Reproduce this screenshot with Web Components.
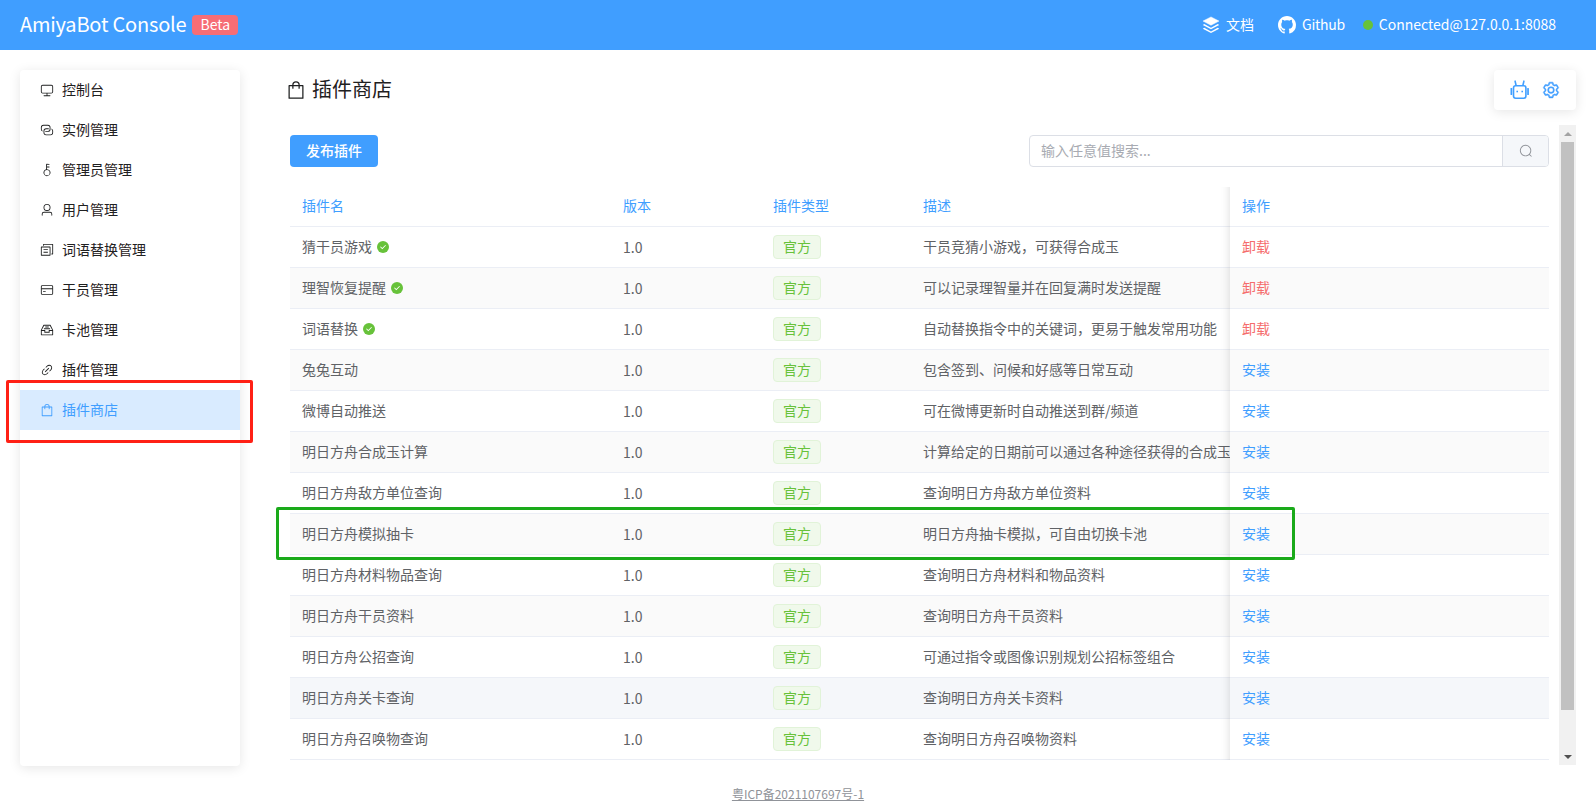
<!DOCTYPE html>
<html lang="zh-CN">
<head>
<meta charset="utf-8">
<title>AmiyaBot Console</title>
<style>
  html, body { margin: 0; height: 100%; overflow: hidden; background: #fff; }
  body { font: 14px/1.5 "Noto Sans CJK SC", "Noto Sans", sans-serif; color: #303133; }
</style>
</head>
<body>
<console-app></console-app>

<script>
"use strict";

// element-plus 아이콘 (viewBox 1024)
const ICONS = {
  monitor: '<path d="M544 768v128h192a32 32 0 1 1 0 64H288a32 32 0 1 1 0-64h192V768H192A128 128 0 0 1 64 640V256a128 128 0 0 1 128-128h640a128 128 0 0 1 128 128v384a128 128 0 0 1-128 128H544zM192 192a64 64 0 0 0-64 64v384a64 64 0 0 0 64 64h640a64 64 0 0 0 64-64V256a64 64 0 0 0-64-64H192z"/>',
  connection: '<path d="M640 384v64H448a128 128 0 0 0-128 128v128a128 128 0 0 0 128 128h320a128 128 0 0 0 128-128V576a128 128 0 0 0-64-110.848V394.88c74.56 26.368 128 97.472 128 181.056v128a192 192 0 0 1-192 192H448a192 192 0 0 1-192-192V576a192 192 0 0 1 192-192h192z"/><path d="M384 640v-64h192a128 128 0 0 0 128-128V320a128 128 0 0 0-128-128H256a128 128 0 0 0-128 128v128a128 128 0 0 0 64 110.848v70.272A192.064 192.064 0 0 1 64 448V320a192 192 0 0 1 192-192h320a192 192 0 0 1 192 192v128a192 192 0 0 1-192 192H384z"/>',
  key: '<path d="M448 456.064V96a32 32 0 0 1 32-32.064L672 64a32 32 0 0 1 0 64H512v128h160a32 32 0 0 1 0 64H512v128a256 256 0 1 1-64 8.064zM512 896a192 192 0 1 0 0-384 192 192 0 0 0 0 384z"/>',
  user: '<path d="M512 512a192 192 0 1 0 0-384 192 192 0 0 0 0 384zm0 64a256 256 0 1 1 0-512 256 256 0 0 1 0 512zm320 320v-96a96 96 0 0 0-96-96H288a96 96 0 0 0-96 96v96a32 32 0 1 1-64 0v-96a160 160 0 0 1 160-160h448a160 160 0 0 1 160 160v96a32 32 0 1 1-64 0z"/>',
  files: '<path d="M256 64h672a32 32 0 0 1 32 32v704a32 32 0 0 1-32 32h-96v-64h64V128H288v64h-64V96a32 32 0 0 1 32-32z"/><path d="M128 256h608a32 32 0 0 1 32 32v608a32 32 0 0 1-32 32H96a32 32 0 0 1-32-32V288a32 32 0 0 1 32-32h32zm0 64v544h576V320H128z"/><path d="M256 448h320v64H256zM256 640h320v64H256z"/>',
  card: '<path d="M160 160h704a96 96 0 0 1 96 96v512a96 96 0 0 1-96 96H160a96 96 0 0 1-96-96V256a96 96 0 0 1 96-96zm0 64a32 32 0 0 0-32 32v512a32 32 0 0 0 32 32h704a32 32 0 0 0 32-32V256a32 32 0 0 0-32-32H160z"/><path d="M96 384h832v64H96zM224 576h192v64H224z"/>',
  box: '<path d="M288 384h448v64H288v-64zm96-128h256v64H384v-64zM131.456 512H384v128h256V512h252.544L721.856 192H302.144L131.456 512zM896 576H704v128H320V576H128v256h768V576zM275.776 128h472.448a32 32 0 0 1 28.608 17.664l179.84 359.552A32 32 0 0 1 960 519.552V864a32 32 0 0 1-32 32H96a32 32 0 0 1-32-32V519.552a32 32 0 0 1 3.392-14.336l179.776-359.552A32 32 0 0 1 275.776 128z"/>',
  link: '<path d="M715.648 625.152 670.4 579.904l90.496-90.56c75.008-74.944 85.12-186.368 22.656-248.896-62.528-62.464-173.952-52.352-248.96 22.656L444.16 353.6l-45.248-45.248 90.496-90.496c100.032-99.968 251.968-110.08 339.456-22.656 87.488 87.488 77.312 239.424-22.656 339.456l-90.496 90.56zm-90.496 90.496-90.496 90.56C434.624 906.24 282.688 916.352 195.2 828.8c-87.488-87.424-77.312-239.36 22.656-339.392l90.56-90.56 45.248 45.248-90.56 90.56c-75.008 74.944-85.12 186.368-22.656 248.896 62.528 62.464 173.952 52.352 248.96-22.656l90.496-90.496 45.248 45.248zm0-362.048 45.248 45.248L398.848 670.4 353.6 625.152z"/>',
  bag: '<path d="M704 320v96a32 32 0 0 1-32 32h-32V320H384v128h-32a32 32 0 0 1-32-32v-96H192v576h640V320H704zm-384-64a192 192 0 1 1 384 0h160a32 32 0 0 1 32 32v640a32 32 0 0 1-32 32H160a32 32 0 0 1-32-32V288a32 32 0 0 1 32-32h160zm64 0h256a128 128 0 1 0-256 0z"/>',
  search: '<path d="m795.904 750.72 124.992 124.928a32 32 0 0 1-45.248 45.248L750.656 795.904a416 416 0 1 1 45.248-45.248zM480 832a352 352 0 1 0 0-704 352 352 0 0 0 0 704z"/>',
  setting: '<path stroke="currentColor" stroke-width="28" d="M600.704 64a32 32 0 0 1 30.464 22.208l35.2 109.376c14.784 7.232 28.928 15.36 42.432 24.512l112.384-24.192a32 32 0 0 1 34.432 15.36L944.32 364.8a32 32 0 0 1-4.032 37.504l-77.12 85.12a357.12 357.12 0 0 1 0 49.024l77.12 85.248a32 32 0 0 1 4.032 37.504l-88.704 153.6a32 32 0 0 1-34.432 15.296L708.8 803.904c-13.44 9.088-27.648 17.28-42.368 24.512l-35.264 109.376A32 32 0 0 1 600.704 960H423.296a32 32 0 0 1-30.464-22.208L357.696 828.48a351.616 351.616 0 0 1-42.56-24.64l-112.32 24.256a32 32 0 0 1-34.432-15.36L79.68 659.2a32 32 0 0 1 4.032-37.504l77.12-85.248a357.12 357.12 0 0 1 0-48.896l-77.12-85.248A32 32 0 0 1 79.68 364.8l88.704-153.6a32 32 0 0 1 34.432-15.296l112.32 24.256c13.568-9.152 27.776-17.408 42.56-24.64l35.2-109.312A32 32 0 0 1 423.232 64H600.64zm-23.424 64H446.72l-36.352 113.088-24.512 11.968a294.113 294.113 0 0 0-34.816 20.096l-22.656 15.36-116.224-25.088-65.28 113.152 79.68 88.192-1.92 27.136a293.12 293.12 0 0 0 0 40.192l1.92 27.136-79.808 88.192 65.344 113.152 116.224-25.024 22.656 15.296a294.113 294.113 0 0 0 34.816 20.096l24.512 11.968L446.72 896h130.688l36.48-113.152 24.448-11.904a288.282 288.282 0 0 0 34.752-20.096l22.592-15.296 116.288 25.024 65.28-113.152-79.744-88.192 1.92-27.136a293.12 293.12 0 0 0 0-40.256l-1.92-27.136 79.808-88.128-65.344-113.152-116.288 24.96-22.592-15.232a287.616 287.616 0 0 0-34.752-20.096l-24.448-11.904L577.344 128zM512 320a192 192 0 1 1 0 384 192 192 0 0 1 0-384zm0 64a128 128 0 1 0 0 256 128 128 0 0 0 0-256z"/>',
  robot: '<g fill="none" stroke="currentColor" stroke-width="82" stroke-linecap="round"><rect x="180" y="297" width="634" height="635" rx="110"/><path d="M307 256 260 60M665 256 712 60"/></g><rect x="26" y="410" width="88" height="358" rx="30"/><rect x="880" y="410" width="88" height="358" rx="30"/><rect x="330" y="550" width="80" height="80"/><rect x="585" y="550" width="80" height="80"/>',
  layers: '<path stroke="currentColor" stroke-width="24" stroke-linejoin="round" d="M512 50 970 290 512 530 54 290z"/><path d="M130 460 44 505 512 755 980 505 894 460 512 665z"/><path d="M130 675 44 720 512 970 980 720 894 675 512 880z"/>',
  github: '<path transform="scale(64)" d="M8 0C3.58 0 0 3.58 0 8c0 3.54 2.29 6.53 5.47 7.59.4.07.55-.17.55-.38 0-.19-.01-.82-.01-1.49-2.01.37-2.53-.49-2.69-.94-.09-.23-.48-.94-.82-1.13-.28-.15-.68-.52-.01-.53.63-.01 1.08.58 1.23.82.72 1.21 1.87.87 2.33.66.07-.52.28-.87.51-1.07-1.78-.2-3.64-.89-3.64-3.95 0-.87.31-1.59.82-2.15-.08-.2-.36-1.02.08-2.12 0 0 .67-.21 2.2.82.64-.18 1.32-.27 2-.27.68 0 1.36.09 2 .27 1.53-1.04 2.2-.82 2.2-.82.44 1.1.16 1.92.08 2.12.51.56.82 1.27.82 2.15 0 3.07-1.87 3.75-3.65 3.95.29.25.54.73.54 1.48 0 1.07-.01 1.93-.01 2.2 0 .21.15.46.55.38A8.013 8.013 0 0016 8c0-4.42-3.58-8-8-8z"/>',
  check: '<circle cx="512" cy="512" r="512"/><path fill="#fff" d="M450 700 262 512l50-50 138 138 262-262 50 50z"/>'
};

class AppIcon extends HTMLElement {
  connectedCallback() {
    const size = this.getAttribute("size") || 14;
    this.attachShadow({ mode: "open" }).innerHTML = `
      <style>
        :host { display: inline-flex; flex: none; width: ${size}px; height: ${size}px; }
        svg { width: 100%; height: 100%; fill: currentColor; }
      </style>
      <svg viewBox="0 0 1024 1024">${ICONS[this.getAttribute("name")]}</svg>`;
  }
}
customElements.define("app-icon", AppIcon);

// 상단 바
// 글자는 폰트 특성상 1px 아래로 쳐져서 .t 의 padding-bottom 으로 올림
class AppHeader extends HTMLElement {
  constructor() {
    super();
    this.attachShadow({ mode: "open" }).innerHTML = `
      <style>
        :host { display: flex; align-items: center; justify-content: space-between; flex: none;
                height: 50px; padding: 0 40px 0 20px; background: #409eff; color: #fff; }
        .brand, .links, .link { display: flex; align-items: center; }
        .t { padding-bottom: 2px; }
        .name { font-size: 20px; letter-spacing: -.2px; padding-bottom: 2px; }
        .beta { margin-left: 6px; height: 20px; padding: 0 8px; border-radius: 4px; background: #f66d75;
                font-size: 14px; line-height: 18px; }
        .links { font-size: 14px; }
        .link { gap: 6px; }
        .docs { margin-right: 24px; }
        .git { margin-right: 18px; letter-spacing: -.3px; }
        .dot { width: 10px; height: 10px; border-radius: 50%; background: #67c23a; }
      </style>
      <div class="brand"><span class="name">AmiyaBot Console</span><span class="beta">Beta</span></div>
      <div class="links">
        <span class="link docs"><app-icon name="layers" size="18"></app-icon><span class="t">文档</span></span>
        <span class="link git"><app-icon name="github" size="18"></app-icon><span class="t">Github</span></span>
        <span class="link"><span class="dot"></span><span class="t">Connected@127.0.0.1:8088</span></span>
      </div>`;
  }
}
customElements.define("app-header", AppHeader);

class MenuItem extends HTMLElement {
  constructor() {
    super();
    this.attachShadow({ mode: "open" }).innerHTML = `
      <style>
        :host { display: flex; align-items: center; gap: 8px; height: 40px; padding-left: 20px; font-size: 14px; color: #1f2021; }
        :host([active]) { background: #d9ebff; color: #409eff; }
        ::slotted(span) { padding-bottom: 2px; }
      </style>
      <slot></slot>`;
  }
  connectedCallback() {
    if (this.querySelector("app-icon")) return;
    const icon = document.createElement("app-icon");
    icon.setAttribute("name", this.getAttribute("icon"));
    this.prepend(icon);
  }
}
customElements.define("menu-item", MenuItem);

class SideMenu extends HTMLElement {
  constructor() {
    super();
    this.attachShadow({ mode: "open" }).innerHTML = `
      <style>
        :host { display: block; flex: none; width: 220px; height: 696px; background: #fff; border-radius: 4px;
                box-shadow: 0 2px 12px rgba(0, 0, 0, .1); overflow: hidden; }
      </style>
      <slot></slot>`;
  }
}
customElements.define("side-menu", SideMenu);

// 우측 플로팅 카드
class ToolCard extends HTMLElement {
  constructor() {
    super();
    this.attachShadow({ mode: "open" }).innerHTML = `
      <style>
        :host { display: flex; align-items: center; gap: 12px; box-sizing: border-box; width: 82px; height: 40px; padding-left: 16px;
                background: #fff; border-radius: 4px; box-shadow: 0 2px 12px rgba(0, 0, 0, .1); color: #409eff; }
      </style>
      <app-icon name="robot" size="20"></app-icon>
      <app-icon name="setting" size="18"></app-icon>`;
  }
}
customElements.define("tool-card", ToolCard);

class SearchBox extends HTMLElement {
  constructor() {
    super();
    this.attachShadow({ mode: "open" }).innerHTML = `
      <style>
        :host { display: flex; width: 520px; height: 32px; box-sizing: border-box; border: 1px solid #dcdfe6;
                border-radius: 4px; font-size: 14px; overflow: hidden; }
        .text { flex: 1; padding-left: 11px; color: #a8abb2; line-height: 28px; }
        .append { display: flex; align-items: center; justify-content: center; width: 45px;
                  border-left: 1px solid #dcdfe6; background: #f5f7fa; color: #909399; }
      </style>
      <div class="text">输入任意值搜索...</div>
      <div class="append"><app-icon name="search"></app-icon></div>`;
  }
}
customElements.define("search-box", SearchBox);

class PluginRow extends HTMLElement {
  constructor() {
    super();
    const installed = this.hasAttribute("installed");
    this.attachShadow({ mode: "open" }).innerHTML = `
      <style>
        :host { display: grid; grid-template-columns: 321px 150px 150px 319px 1fr; height: 41px; box-sizing: border-box;
                border-bottom: 1px solid #ebeef5; background: var(--row-bg, #fff); color: #606266; font-size: 14px; }
        .cell { display: flex; align-items: center; gap: 5px; padding-left: 12px; white-space: nowrap; overflow: hidden; }
        .t { padding-bottom: 2px; }
        .op { background: var(--row-bg, #fff); color: ${installed ? "#f56c6c" : "#409eff"}; }
        .tag { display: inline-flex; align-items: center; justify-content: center; box-sizing: border-box; width: 48px; height: 24px;
               padding-bottom: 2px; border: 1px solid #e1f3d8; border-radius: 4px; background: #f0f9eb; color: #67c23a; }
        app-icon { color: #67c23a; }
      </style>
      <div class="cell"><span class="t">${this.getAttribute("name")}</span>${installed ? '<app-icon name="check" size="12"></app-icon>' : ""}</div>
      <div class="cell">1.0</div>
      <div class="cell"><span class="tag">官方</span></div>
      <div class="cell"><span class="t">${this.getAttribute("desc")}</span></div>
      <div class="cell op"><span class="t">${installed ? "卸载" : "安装"}</span></div>`;
  }
}
customElements.define("plugin-row", PluginRow);

const PLUGINS = [
  ["猜干员游戏", "干员竞猜小游戏，可获得合成玉", true],
  ["理智恢复提醒", "可以记录理智量并在回复满时发送提醒", true],
  ["词语替换", "自动替换指令中的关键词，更易于触发常用功能", true],
  ["兔兔互动", "包含签到、问候和好感等日常互动"],
  ["微博自动推送", "可在微博更新时自动推送到群/频道"],
  ["明日方舟合成玉计算", "计算给定的日期前可以通过各种途径获得的合成玉"],
  ["明日方舟敌方单位查询", "查询明日方舟敌方单位资料"],
  ["明日方舟模拟抽卡", "明日方舟抽卡模拟，可自由切换卡池"],
  ["明日方舟材料物品查询", "查询明日方舟材料和物品资料"],
  ["明日方舟干员资料", "查询明日方舟干员资料"],
  ["明日方舟公招查询", "可通过指令或图像识别规划公招标签组合"],
  ["明日方舟关卡查询", "查询明日方舟关卡资料"],
  ["明日方舟召唤物查询", "查询明日方舟召唤物资料"]
];

class PluginTable extends HTMLElement {
  constructor() {
    super();
    const rows = PLUGINS.map(([name, desc, installed], i) => {
      let bg = i % 2 ? "#fafafa" : "#fff";
      if (i === 11) bg = "#f5f7fa"; // 마우스 hover 상태
      return `<plugin-row style="--row-bg:${bg}" name="${name}" desc="${desc}" ${installed ? "installed" : ""}></plugin-row>`;
    }).join("");
    this.attachShadow({ mode: "open" }).innerHTML = `
      <style>
        :host { display: block; position: relative; font-size: 14px; }
        .head { display: grid; grid-template-columns: 321px 150px 150px 319px 1fr; height: 40px; box-sizing: border-box;
                border-bottom: 1px solid #ebeef5; color: #409eff; align-items: center; }
        .head span { padding: 0 0 2px 12px; }
        .shadow { position: absolute; top: 0; bottom: 0; left: 930px; width: 10px;
                  box-shadow: inset -10px 0 10px -10px rgba(0, 0, 0, .15); pointer-events: none; }
      </style>
      <div class="head"><span>插件名</span><span>版本</span><span>插件类型</span><span>描述</span><span>操作</span></div>
      ${rows}
      <div class="shadow"></div>`;
  }
}
customElements.define("plugin-table", PluginTable);

// 스크롤바 (헤드리스에서 안 보여서 직접 그림)
class FakeScrollbar extends HTMLElement {
  constructor() {
    super();
    this.attachShadow({ mode: "open" }).innerHTML = `
      <style>
        :host { display: flex; flex-direction: column; align-items: center; flex: none; width: 17px; height: 640px; background: #f1f1f1; }
        .btn { display: flex; align-items: center; justify-content: center; flex: none; width: 17px; height: 17px; }
        .up { border: 4px solid transparent; border-bottom: 4px solid #a3a3a3; border-top: 0; width: 0; height: 0; }
        .down { border: 4px solid transparent; border-top: 4px solid #505050; border-bottom: 0; width: 0; height: 0; }
        .thumb { width: 13px; height: 568px; background: #c1c1c1; }
        .rest { flex: 1; }
      </style>
      <div class="btn"><div class="up"></div></div>
      <div class="thumb"></div>
      <div class="rest"></div>
      <div class="btn"><div class="down"></div></div>`;
  }
}
customElements.define("fake-scrollbar", FakeScrollbar);

class PluginStore extends HTMLElement {
  constructor() {
    super();
    this.attachShadow({ mode: "open" }).innerHTML = `
      <style>
        :host { display: flex; flex-direction: column; flex: 1; min-width: 0; margin-left: 50px; }
        .title-row { display: flex; align-items: center; justify-content: space-between; height: 40px; margin-bottom: 15px; }
        .title { display: flex; align-items: center; gap: 6px; margin-left: -4px; font-size: 20px; color: #1f2021; }
        .title span { padding-bottom: 2px; }
        .scroll { display: flex; gap: 10px; }
        .body { flex: 1; min-width: 0; padding-top: 10px; }
        .toolbar { display: flex; justify-content: space-between; margin-bottom: 20px; }
        .publish { display: flex; align-items: center; justify-content: center; box-sizing: border-box; width: 88px; height: 32px; padding-bottom: 2px;
                   border-radius: 4px; background: #409eff; color: #fff; font-size: 14px; font-weight: 500; }
      </style>
      <div class="title-row">
        <div class="title"><app-icon name="bag" size="20"></app-icon><span>插件商店</span></div>
        <tool-card></tool-card>
      </div>
      <div class="scroll">
        <div class="body">
          <div class="toolbar"><div class="publish">发布插件</div><search-box></search-box></div>
          <plugin-table></plugin-table>
        </div>
        <fake-scrollbar></fake-scrollbar>
      </div>`;
  }
}
customElements.define("plugin-store", PluginStore);

class ConsoleApp extends HTMLElement {
  constructor() {
    super();
    const menu = [
      ["monitor", "控制台"], ["connection", "实例管理"], ["key", "管理员管理"], ["user", "用户管理"],
      ["files", "词语替换管理"], ["card", "干员管理"], ["box", "卡池管理"], ["link", "插件管理"], ["bag", "插件商店"]
    ].map(([icon, label]) => `<menu-item icon="${icon}" ${label === "插件商店" ? "active" : ""}><span>${label}</span></menu-item>`).join("");
    this.attachShadow({ mode: "open" }).innerHTML = `
      <style>
        :host { display: flex; flex-direction: column; position: relative; height: 805px; overflow: hidden; }
        main { display: flex; flex: none; padding: 20px 20px 0; }
        footer { flex: 1; display: flex; align-items: flex-end; justify-content: center; padding-bottom: 2px; }
        footer a { font-size: 12px; color: #909399; text-decoration: underline; }
        /* 스크린샷의 빨강/초록 표시 박스 */
        .mark { position: absolute; box-sizing: border-box; border: 3px solid; border-radius: 2px; pointer-events: none; }
        .red { left: 6px; top: 380px; width: 247px; height: 63px; border-color: #ff2015; }
        .green { left: 276px; top: 507px; width: 1019px; height: 53px; border-color: #1aaa1a; }
      </style>
      <app-header></app-header>
      <main>
        <side-menu>${menu}</side-menu>
        <plugin-store></plugin-store>
      </main>
      <footer><a>粤ICP备2021107697号-1</a></footer>
      <div class="mark red"></div>
      <div class="mark green"></div>`;
  }
}
customElements.define("console-app", ConsoleApp);
</script>
</body>
</html>
